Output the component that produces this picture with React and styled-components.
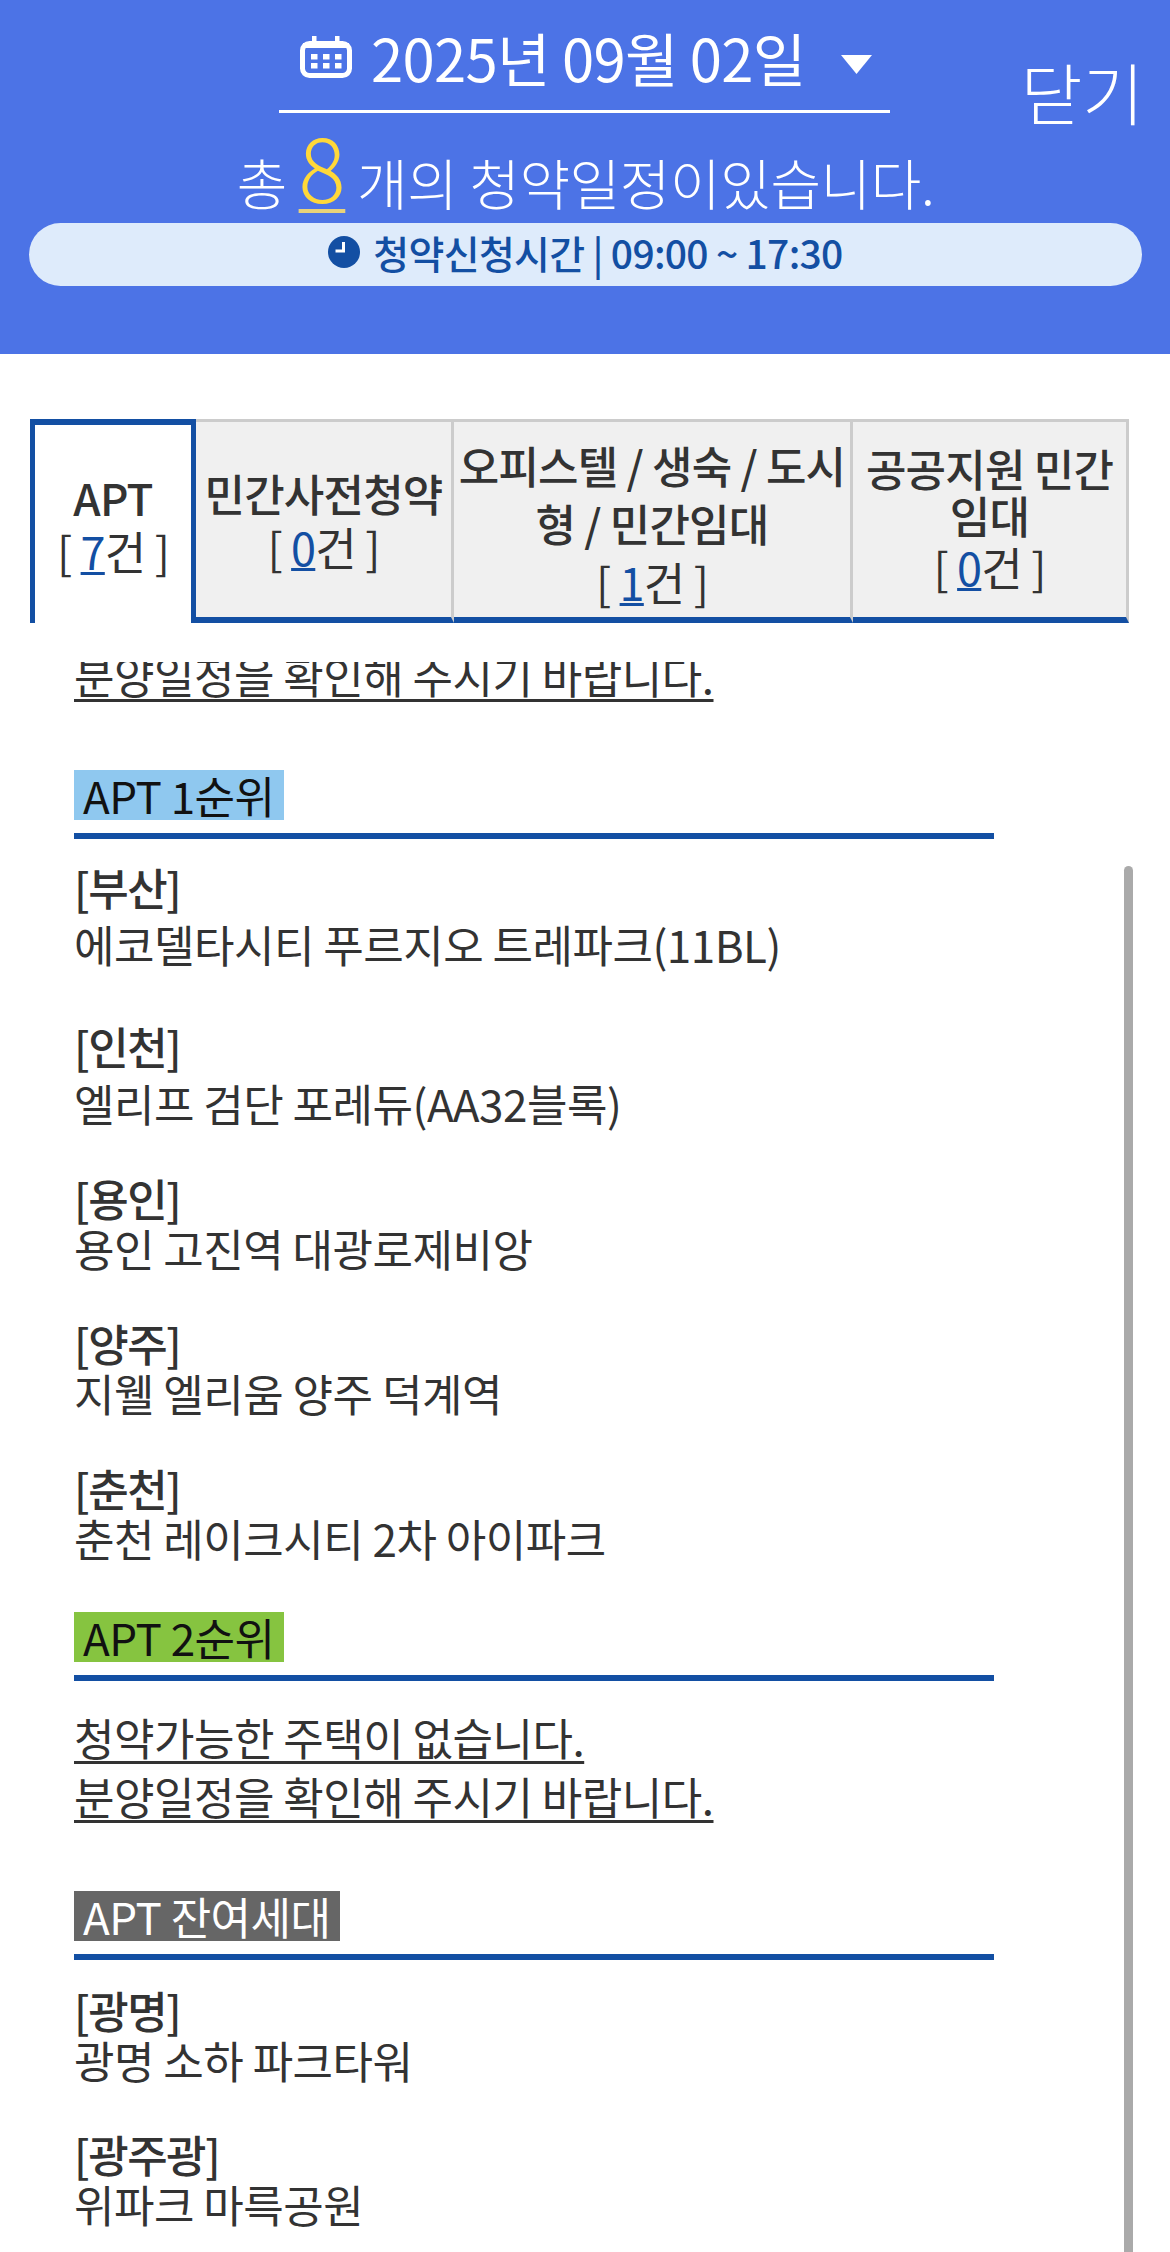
import React from "react";
import styled, { createGlobalStyle } from "styled-components";

const Global = createGlobalStyle`
  html, body { margin: 0; padding: 0; background: #fff; }
  body { font-family: "Noto Sans CJK KR", "Noto Sans", sans-serif; color: #333; }
`;

const Page = styled.div`
  width: 1170px;
  height: 2252px;
  overflow: hidden;
  display: flex;
  flex-direction: column;
`;

const Header = styled.header`
  height: 354px;
  flex: none;
  background: #4c73e6;
  position: relative;
  color: #fff;
  box-sizing: border-box;
  padding: 18px 28px 0 29px;
  display: flex;
  flex-direction: column;
`;

const DateSelect = styled.div`
  align-self: flex-start;
  margin-left: 250px;
  width: 611px;
  height: 95px;
  box-sizing: border-box;
  border-bottom: 3px solid #fff;
  display: flex;
  align-items: center;
  padding: 0 0 15px 21px;
`;

const DateText = styled.span`
  font-size: 58px;
  line-height: 60px;
  margin: 0 35px 0 19px;
  letter-spacing: -0.7px;
  white-space: nowrap;
`;

const Close = styled.button`
  position: absolute;
  right: 26px;
  top: 46px;
  background: none;
  border: 0;
  padding: 0;
  color: #fff;
  font: 300 67px/90px "Noto Sans CJK KR", sans-serif;
`;

const Summary = styled.p`
  margin: 13px 0 0;
  height: 78px;
  text-align: center;
  font-size: 55px;
  line-height: 78px;
  font-weight: 300;
  letter-spacing: -0.4px;
  white-space: nowrap;
`;

const Count = styled.span`
  color: #ffd83a;
  font-size: 88px;
  line-height: 78px;
  vertical-align: 2px;
  text-decoration: underline;
  text-decoration-color: #e8d27a;
  text-decoration-thickness: 4px;
  text-underline-offset: 6px;
`;

const Notice = styled.div`
  margin-top: 19px;
  height: 63px;
  border-radius: 32px;
  background: #deebfb;
  color: #134fa3;
  font-size: 39px;
  font-weight: 500;
  display: flex;
  align-items: center;
  justify-content: center;
  gap: 13px;
  letter-spacing: -0.7px;
  padding-bottom: 6px;
  box-sizing: border-box;
`;

const Tabs = styled.nav`
  flex: none;
  margin: 65px 0 0 30px;
  display: flex;
  height: 204px;
`;

const Tab = styled.div`
  flex: none;
  width: ${(p) => p.$w}px;
  box-sizing: border-box;
  display: flex;
  flex-direction: column;
  justify-content: center;
  align-items: center;
  text-align: center;
  padding-top: ${(p) => p.$pt || 0}px;
  color: #333;
  background: ${(p) => (p.$active ? "#fff" : "#f0f0f0")};
  border-top: ${(p) => (p.$active ? "6px solid #134fa3" : "3px solid #ccc")};
  border-left: ${(p) => (p.$active ? "5px solid #134fa3" : "none")};
  border-right: ${(p) => (p.$active ? "5px solid #134fa3" : "3px solid #ccc")};
  border-bottom: ${(p) => (p.$active ? "none" : "6px solid #134fa3")};
`;

const TabTitle = styled.span`
  font-size: 44px;
  line-height: ${(p) => p.$lh}px;
  letter-spacing: -0.8px;
  font-weight: 500;
`;

const TabCount = styled.span`
  font-weight: 400;
  font-size: 45px;
  line-height: ${(p) => p.$lh}px;
  letter-spacing: -0.8px;
  u {
    color: #134fa3;
    text-decoration-thickness: 3px;
  }
`;

const Panel = styled.main`
  flex: 1;
  min-height: 0;
  margin-top: 39px;
  position: relative;
  overflow: hidden;
`;

const Scroller = styled.div`
  margin-top: -17px;
  padding: 0 0 0 74px;
`;

const Empty = styled.p`
  margin: 0;
  height: 59px;
  font-size: 44px;
  line-height: 60px;
  letter-spacing: -0.5px;
  text-decoration: underline;
  text-decoration-thickness: 3px;
  text-underline-offset: 5px;
`;

const Section = styled.section`
  margin-top: ${(p) => p.$top}px;
`;

const Chip = styled.span`
  display: block;
  width: fit-content;
  height: 50px;
  line-height: 50px;
  padding: 0 9px;
  font-size: 44px;
  letter-spacing: -0.5px;
  background: ${(p) => p.$bg};
  color: ${(p) => p.$fg};
`;

const Rule = styled.div`
  width: 920px;
  height: 6px;
  margin-top: 13px;
  background: #134fa3;
`;

const Items = styled.div`
  margin-top: ${(p) => p.$top}px;
`;

const Item = styled.div`
  margin-bottom: ${(p) => p.$gap}px;
`;

const Region = styled.div`
  font-size: 44px;
  line-height: 50px;
  font-weight: 500;
  letter-spacing: -1.5px;
`;

const Name = styled.div`
  font-size: 44px;
  height: 50px;
  line-height: 50px;
  margin-top: ${(p) => p.$top}px;
  letter-spacing: -0.5px;
`;

const Scrollbar = styled.div`
  position: absolute;
  right: 37px;
  top: 204px;
  bottom: 0;
  width: 9px;
  border-radius: 5px 5px 0 0;
  background: #aaa;
`;

const CaretSvg = styled.svg`
  flex: none;
  margin-top: 16px;
`;

const IconSvg = styled.svg`
  flex: none;
`;

const CalendarIcon = () => (
  <IconSvg width="52" height="42" viewBox="0 0 52 42">
    <rect x="2.5" y="7.5" width="47" height="32" rx="7" fill="none" stroke="#fff" strokeWidth="5" />
    <rect x="12" y="0" width="4.5" height="10" fill="#fff" />
    <rect x="35" y="0" width="4.5" height="10" fill="#fff" />
    <rect x="3" y="7" width="46" height="5" fill="#fff" />
    {[11, 23, 35].map((x) =>
      [18, 27].map((y) => <rect key={x + "-" + y} x={x} y={y} width="6.5" height="5.5" fill="#fff" />)
    )}
  </IconSvg>
);

const CaretIcon = () => (
  <CaretSvg width="31" height="19" viewBox="0 0 31 19">
    <path d="M0 0h31L15.5 19z" fill="#fff" />
  </CaretSvg>
);

const ClockIcon = () => (
  <IconSvg width="32" height="32" viewBox="0 0 32 32">
    <circle cx="16" cy="16" r="16" fill="#134fa3" />
    <path d="M15.5 6v9H7.5" fill="none" stroke="#fff" strokeWidth="3" />
  </IconSvg>
);

const first = [
  ["[부산]", "에코델타시티 푸르지오 트레파크(11BL)", 7, 52],
  ["[인천]", "엘리프 검단 포레듀(AA32블록)", 7, 45],
  ["[용인]", "용인 고진역 대광로제비앙", 0, 45],
  ["[양주]", "지웰 엘리움 양주 덕계역", 0, 45],
  ["[춘천]", "춘천 레이크시티 2차 아이파크", 0, 49],
];
const rest = [
  ["[광명]", "광명 소하 파크타워", 0, 44],
  ["[광주광]", "위파크 마륵공원", 0, 45],
];

const renderItems = (list) =>
  list.map(([r, n, top, gap]) => (
    <Item key={r} $gap={gap}>
      <Region>{r}</Region>
      <Name $top={top}>{n}</Name>
    </Item>
  ));

export default function App() {
  return (
    <Page>
      <Global />
      <Header>
        <DateSelect>
          <CalendarIcon />
          <DateText>2025년 09월 02일</DateText>
          <CaretIcon />
        </DateSelect>
        <Close>닫기</Close>
        <Summary>
          총 <Count>8</Count> 개의 청약일정이있습니다.
        </Summary>
        <Notice>
          <ClockIcon />
          청약신청시간 | 09:00 ~ 17:30
        </Notice>
      </Header>
      <Tabs>
        <Tab $w={166} $active>
          <TabTitle $lh={54}>APT</TabTitle>
          <TabCount $lh={54}>[ <u>7</u>건 ]</TabCount>
        </Tab>
        <Tab $w={258}>
          <TabTitle $lh={54}>민간사전청약</TabTitle>
          <TabCount $lh={54}>[ <u>0</u>건 ]</TabCount>
        </Tab>
        <Tab $w={399} $pt={8}>
          <TabTitle $lh={58}>오피스텔 / 생숙 / 도시형 / 민간임대</TabTitle>
          <TabCount $lh={60}>[ <u>1</u>건 ]</TabCount>
        </Tab>
        <Tab $w={276}>
          <TabTitle $lh={47}>공공지원 민간임대</TabTitle>
          <TabCount $lh={56}>[ <u>0</u>건 ]</TabCount>
        </Tab>
      </Tabs>
      <Panel>
        <Scroller>
          <Empty>분양일정을 확인해 주시기 바랍니다.</Empty>
          <Section $top={66}>
            <Chip $bg="#8fc8ef" $fg="#111">APT 1순위</Chip>
            <Rule />
            <Items $top={23}>{renderItems(first)}</Items>
          </Section>
          <Section $top={0}>
            <Chip $bg="#86c440" $fg="#111">APT 2순위</Chip>
            <Rule />
            <Items $top={26}>
              <Empty>청약가능한 주택이 없습니다.</Empty>
              <Empty>분양일정을 확인해 주시기 바랍니다.</Empty>
            </Items>
          </Section>
          <Section $top={66}>
            <Chip $bg="#666" $fg="#fff">APT 잔여세대</Chip>
            <Rule />
            <Items $top={25}>{renderItems(rest)}</Items>
          </Section>
        </Scroller>
        <Scrollbar />
      </Panel>
    </Page>
  );
}
